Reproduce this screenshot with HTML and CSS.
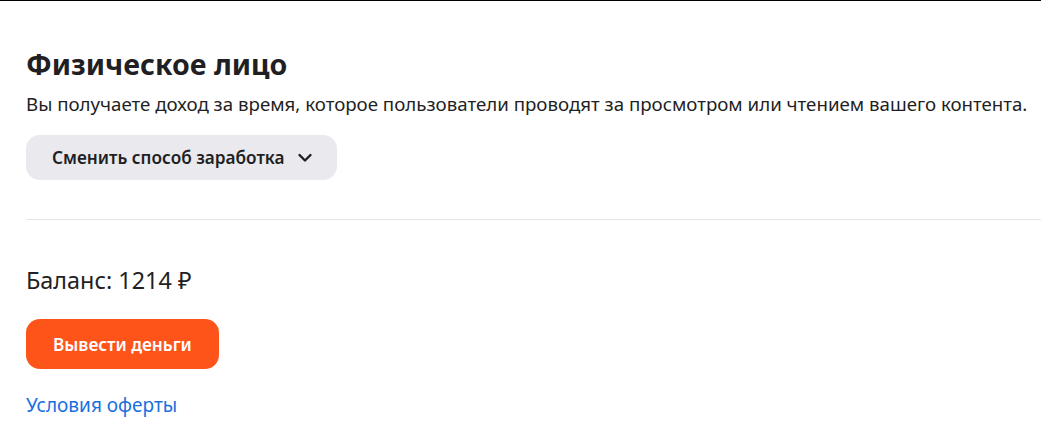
FILE: index.html
```html
<html lang="ru">
<head>
    <meta charset="utf-8">
    <title>Монетизация</title>
    <link rel="stylesheet" href="styles.css">
</head>
<body>
<div class="page">
    <div class="section">
        <h1 class="title">Физическое лицо</h1>
        <p class="desc">Вы получаете доход за время, которое пользователи проводят за просмотром или чтением вашего контента.</p>
        <button class="btn btnGray">
            Сменить способ заработка
            <svg class="chevron" width="16" height="16" viewBox="0 0 16 16">
                <path d="M2.5 5l5.5 5.5 5.5-5.5" fill="none" stroke="#1f1f24" stroke-width="2.4" stroke-linecap="round" stroke-linejoin="round"/>
            </svg>
        </button>
    </div>
    <div class="divider"></div>
    <div class="section balance">
        <div class="balanceText">Баланс: 1214 ₽</div>
        <button class="btn btnOrange">Вывести деньги</button>
        <a class="link" href="#">Условия оферты</a>
    </div>
</div>
</body>
</html>
```

FILE: styles.css
```css
* {
    box-sizing: border-box;
}

html {
    background: #ffffff;
}

body {
    margin: 0;
    font-family: 'Noto Sans', sans-serif;
    color: #1f1f24;
    border-top: 1px solid #000000;
}

.page {
    padding: 44px 0 0 26px;
}

.title {
    margin: 0;
    font-size: 28.6px;
    font-weight: 700;
    line-height: 38px;
}

.desc {
    margin: 7px 0 0 0;
    font-size: 18.7px;
    line-height: 28px;
    white-space: nowrap;
}

.btn {
    border: none;
    font-family: inherit;
    font-size: 17.2px;
    font-weight: 600;
    border-radius: 14px;
    cursor: pointer;
}

.btnGray {
    display: flex;
    align-items: center;
    gap: 12px;
    margin-top: 17px;
    height: 45px;
    padding: 0 24px 0 26px;
    background: #e9e9ee;
    color: #1f1f24;
}

.chevron {
    display: block;
}

.divider {
    height: 1px;
    background: #e6e6e8;
    margin-top: 39px;
}

.balance {
    display: flex;
    flex-direction: column;
    align-items: flex-start;
}

.balanceText {
    margin-top: 45px;
    font-size: 23.4px;
    font-weight: 400;
    line-height: 30px;
}

.btnOrange {
    margin-top: 24px;
    height: 50px;
    padding: 0 27px;
    background: #ff5419;
    color: #ffffff;
}

.link {
    margin-top: 24px;
    font-size: 19px;
    line-height: 24px;
    color: #1a6fe0;
    text-decoration: none;
}
```
